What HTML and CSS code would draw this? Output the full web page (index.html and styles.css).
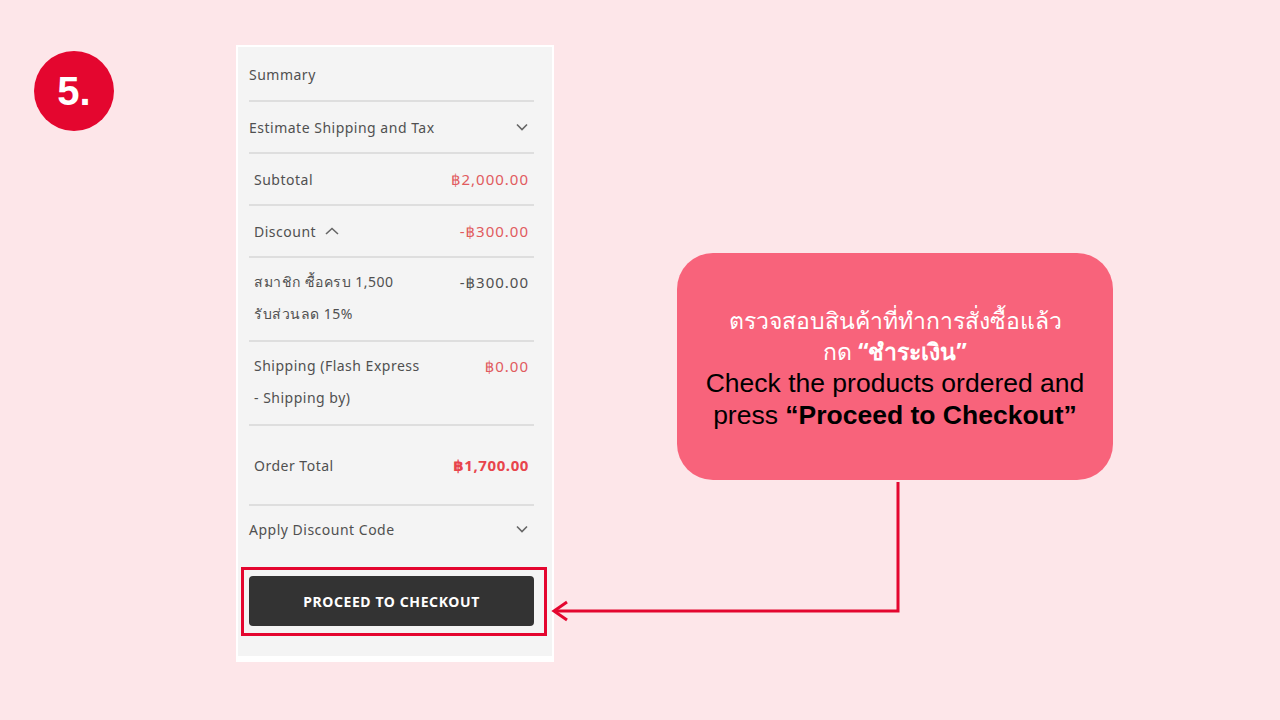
FILE: index.html
```html
<!DOCTYPE html>
<html lang="th">
<head>
    <meta charset="UTF-8">
    <meta name="viewport" content="width=device-width, initial-scale=1.0">
    <title>Step 5 - Proceed to Checkout</title>
    <link rel="stylesheet" href="styles.css">
</head>
<body>
    <div class="slide">
        <div class="step-badge">5.</div>

        <div class="summary">
            <div class="row row-title">Summary</div>
            <div class="row row-toggle">
                <span>Estimate Shipping and Tax</span>
                <svg class="chevron" viewBox="0 0 12 8"><path d="M1 1.5 L6 6.5 L11 1.5"/></svg>
            </div>
            <div class="row row-item">
                <span>Subtotal</span>
                <span class="price">฿2,000.00</span>
            </div>
            <div class="row row-item">
                <span class="discount-label">Discount
                    <svg class="chevron up" viewBox="0 0 14 8"><path d="M1 7 L7 1.5 L13 7"/></svg>
                </span>
                <span class="price">-฿300.00</span>
            </div>
            <div class="row row-item row-tall">
                <span>สมาชิก ซื้อครบ 1,500<br>รับส่วนลด 15%</span>
                <span class="price amount">-฿300.00</span>
            </div>
            <div class="row row-item row-tall">
                <span>Shipping (Flash Express<br>- Shipping by)</span>
                <span class="price">฿0.00</span>
            </div>
            <div class="row row-item row-total">
                <span>Order Total</span>
                <span class="price total">฿1,700.00</span>
            </div>
            <div class="row row-toggle row-last">
                <span>Apply Discount Code</span>
                <svg class="chevron" viewBox="0 0 12 8"><path d="M1 1.5 L6 6.5 L11 1.5"/></svg>
            </div>
            <div class="highlight">
                <button class="btn-checkout">PROCEED TO CHECKOUT</button>
            </div>
        </div>

        <div class="callout">
            <p class="th">ตรวจสอบสินค้าที่ทำการสั่งซื้อแล้ว<br>กด <strong>“ชำระเงิน”</strong></p>
            <p class="en">Check the products ordered and<br>press <strong>“Proceed to Checkout”</strong></p>
        </div>

        <!-- connector from the callout to the button -->
        <svg class="connector" viewBox="0 0 1280 720">
            <polyline points="898,482 898,611 554,611"/>
            <polyline points="567,602 554,611 567,620"/>
        </svg>
    </div>
</body>
</html>
```

FILE: styles.css
```css
body {
    margin: 0;
    background-color: #fde6e9;
    font-family: "Noto Sans", "DejaVu Sans", sans-serif;
}
.slide {
    position: relative;
    width: 1280px;
    height: 720px;
    display: flex;
    align-items: flex-start;
    padding: 45px 0 0 34px;
    box-sizing: border-box;
}
.step-badge {
    width: 80px;
    height: 80px;
    margin-top: 6px;
    border-radius: 50%;
    background-color: #e4062f;
    color: white;
    font-family: "Liberation Sans", Arial, sans-serif;
    font-weight: bold;
    font-size: 40px;
    display: flex;
    align-items: center;
    justify-content: center;
}
.summary {
    width: 318px;
    margin-left: 122px;
    box-sizing: border-box;
    background-color: #f4f4f4;
    border: 2px solid #fff;
    border-bottom-width: 6px;
    padding: 0 18px 20px 11px;
    color: #505050;
    font-size: 14px;
    letter-spacing: 0.5px;
}
.row {
    display: flex;
    align-items: center;
    justify-content: space-between;
    height: 52px;
    box-sizing: border-box;
    border-bottom: 2px solid #dedede;
}
.row-title {
    height: 55px;
    padding-top: 1px;
}
.row-item {
    padding: 0 6px 0 5px;
}
.row-toggle {
    padding-right: 6px;
}
.row-tall {
    height: 84px;
    align-items: flex-start;
    padding-top: 8px;
}
.row-tall span {
    line-height: 32px;
}
.row-total {
    height: 80px;
}
.row-last {
    height: 46px;
    border-bottom: none;
}
.discount-label {
    display: flex;
    align-items: center;
    gap: 9px;
}
.chevron {
    width: 12px;
    height: 8px;
    fill: none;
    stroke: #666;
    stroke-width: 1.6;
}
.chevron.up {
    width: 14px;
}
.price {
    color: #e15b5e;
    font-size: 15px;
    letter-spacing: 1px;
    margin-right: -1px;
}
.price.amount {
    color: #505050;
}
.price.total {
    color: #e8444c;
    font-weight: bold;
    letter-spacing: 0.6px;
}
.highlight {
    margin: 15px -13px 0 -8px;
    border: 3px solid #e4062f;
    padding: 6px 10px 7px 5px;
}
.btn-checkout {
    display: block;
    width: 100%;
    height: 50px;
    border: none;
    border-radius: 4px;
    background-color: #333;
    color: white;
    font-family: "Noto Sans", "DejaVu Sans", sans-serif;
    font-weight: bold;
    font-size: 14px;
    letter-spacing: 0.6px;
}
.callout {
    width: 436px;
    height: 227px;
    margin: 208px 0 0 123px;
    box-sizing: border-box;
    border-radius: 36px;
    background-color: #f8637b;
    display: flex;
    flex-direction: column;
    justify-content: center;
    align-items: center;
    text-align: center;
    padding-top: 2px;
}
.callout p {
    margin: 0;
    line-height: 31px;
}
.callout .th {
    color: white;
    font-size: 23px;
}
.callout .en {
    color: #000;
    font-family: "Liberation Sans", Arial, sans-serif;
    font-size: 26.5px;
    line-height: 32px;
}
.connector {
    position: absolute;
    top: 0;
    left: 0;
    width: 1280px;
    height: 720px;
    pointer-events: none;
}
.connector polyline {
    fill: none;
    stroke: #e4062f;
    stroke-width: 3;
}
```
